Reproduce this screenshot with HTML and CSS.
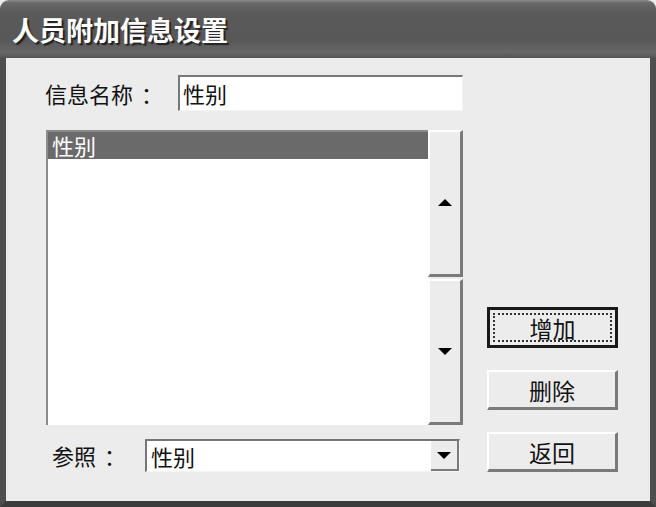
FILE: index.html
```html
<!DOCTYPE html>
<html lang="zh-CN">
<head>
  <meta charset="UTF-8" />
  <title>人员附加信息设置</title>
  <link rel="stylesheet" href="styles.css">
</head>
<body>
  <div class="window">
    <div class="titlebar">人员附加信息设置</div>

    <div class="client">
      <!-- 信息名称 -->
      <div class="name-row">
        <span class="label">信息名称<span class="colon">：</span></span>
        <div class="textbox">性别</div>
      </div>

      <!-- 列表 -->
      <div class="listbox">
        <div class="list-item selected">性别</div>
      </div>

      <div class="scroll-col">
        <div class="scroll-btn"><span class="arrow-up"></span></div>
        <div class="scroll-btn"><span class="arrow-down"></span></div>
      </div>

      <!-- 按钮 -->
      <div class="button-col">
        <button class="btn default"><span class="focus">增加</span></button>
        <button class="btn">删除</button>
        <button class="btn">返回</button>
      </div>

      <!-- 参照 -->
      <div class="ref-row">
        <span class="label">参照<span class="colon">：</span></span>
        <div class="combo">
          <span class="combo-text">性别</span>
          <span class="combo-btn"><span class="arrow-down"></span></span>
        </div>
      </div>
    </div>
  </div>
</body>
</html>
```

FILE: styles.css
```css
/* Reset */
* {
  box-sizing: border-box;
  margin: 0;
  padding: 0;
}

body {
  font-family: "Noto Sans CJK SC", "Liberation Sans", sans-serif;
  background-color: #ffffff;
  color: #111;
}

/* Window frame */
.window {
  width: 656px;
  height: 507px;
  display: flex;
  flex-direction: column;
  background-color: #ececec;
}

.titlebar {
  height: 58px;
  padding-left: 12px;
  display: flex;
  align-items: center;
  font-size: 27px;
  font-weight: bold;
  color: #fff;
  text-shadow: 2px 2px 1px #222;
  border-radius: 9px 9px 0 0;
  background: linear-gradient(#8a8a8a 0, #6a6a6a 3px, #5a5a5a 12px, #585858 40px, #666 52px, #555 58px);
}

.client {
  flex: 1;
  border-left: 6px solid #4e4e4e;
  border-right: 6px solid #4e4e4e;
  border-bottom: 6px solid #3c3c3c;
  padding: 17px 0 0 40px;
  display: grid;
  grid-template-columns: 382px 35px 24px 131px;
  grid-template-rows: 36px 314px 47px;
}

.label {
  font-size: 22px;
  line-height: 1;
}

/* full-width colon sits centred in the reference */
.colon {
  padding-left: 8px;
}

/* Row 1 */
.name-row {
  grid-column: 1 / 3;
  grid-row: 1;
  display: flex;
  align-items: center;
  justify-content: space-between;
}

.name-row .label {
  margin-left: -1px;
}

.textbox {
  width: 285px;
  height: 36px;
  background-color: #fff;
  border-top: 2px solid #777;
  border-left: 2px solid #777;
  border-right: 1px solid #f4f4f4;
  border-bottom: 1px solid #f4f4f4;
  font-size: 22px;
  line-height: 32px;
  padding-left: 3px;
}

/* List */
.listbox {
  grid-column: 1;
  grid-row: 2;
  align-self: end;
  height: 295px;
  background-color: #fff;
  border-left: 2px solid #8a8a8a;
  border-top: 2px solid #8a8a8a;
}

.list-item {
  height: 27px;
  font-size: 22px;
  line-height: 27px;
  padding-left: 4px;
}

.list-item.selected {
  background-color: #6a6a6a;
  color: #fff;
}

.scroll-col {
  grid-column: 2;
  grid-row: 2;
  align-self: end;
  height: 295px;
  display: flex;
  flex-direction: column;
  gap: 2px;
}

.scroll-btn {
  flex: 1;
  display: flex;
  align-items: center;
  justify-content: center;
  background-color: #ececec;
  border-top: 2px solid #fff;
  border-left: 2px solid #fff;
  border-right: 3px solid #7a7a7a;
  border-bottom: 3px solid #7a7a7a;
}

.arrow-up {
  width: 0;
  height: 0;
  border-left: 7px solid transparent;
  border-right: 7px solid transparent;
  border-bottom: 7px solid #000;
}

.arrow-down {
  width: 0;
  height: 0;
  border-left: 7px solid transparent;
  border-right: 7px solid transparent;
  border-top: 7px solid #000;
}

/* Buttons */
.button-col {
  grid-column: 4;
  grid-row: 2 / 4;
  display: flex;
  flex-direction: column;
  justify-content: flex-end;
  gap: 22px;
}

.btn {
  height: 40px;
  width: 131px;
  font-family: inherit;
  font-size: 23px;
  color: #111;
  background-color: #ececec;
  border-top: 2px solid #fff;
  border-left: 2px solid #fff;
  border-right: 3px solid #7a7a7a;
  border-bottom: 3px solid #7a7a7a;
  display: flex;
  align-items: center;
  justify-content: center;
}

.btn.default {
  height: 41px;
  border: 3px solid #1a1a1a;
  padding: 3px;
}

.btn .focus {
  width: 100%;
  height: 100%;
  border: 2px dotted #333;
  display: flex;
  align-items: center;
  justify-content: center;
}

/* Row 3 */
.ref-row {
  grid-column: 1 / 3;
  grid-row: 3;
  display: flex;
  align-items: flex-end;
  justify-content: space-between;
}

.ref-row .label {
  margin-left: 6px;
  margin-bottom: 6px;
}

.combo {
  width: 315px;
  height: 33px;
  margin-right: 3px;
  display: flex;
  align-items: stretch;
  background-color: #fff;
  border-top: 2px solid #777;
  border-left: 2px solid #777;
  border-right: 1px solid #f4f4f4;
  border-bottom: 1px solid #f4f4f4;
}

.combo-text {
  flex: 1;
  font-size: 22px;
  line-height: 30px;
  padding-left: 4px;
}

.combo-btn {
  width: 28px;
  display: flex;
  align-items: center;
  justify-content: center;
  background-color: #ececec;
  border-right: 2px solid #7a7a7a;
  border-bottom: 2px solid #7a7a7a;
}
```
